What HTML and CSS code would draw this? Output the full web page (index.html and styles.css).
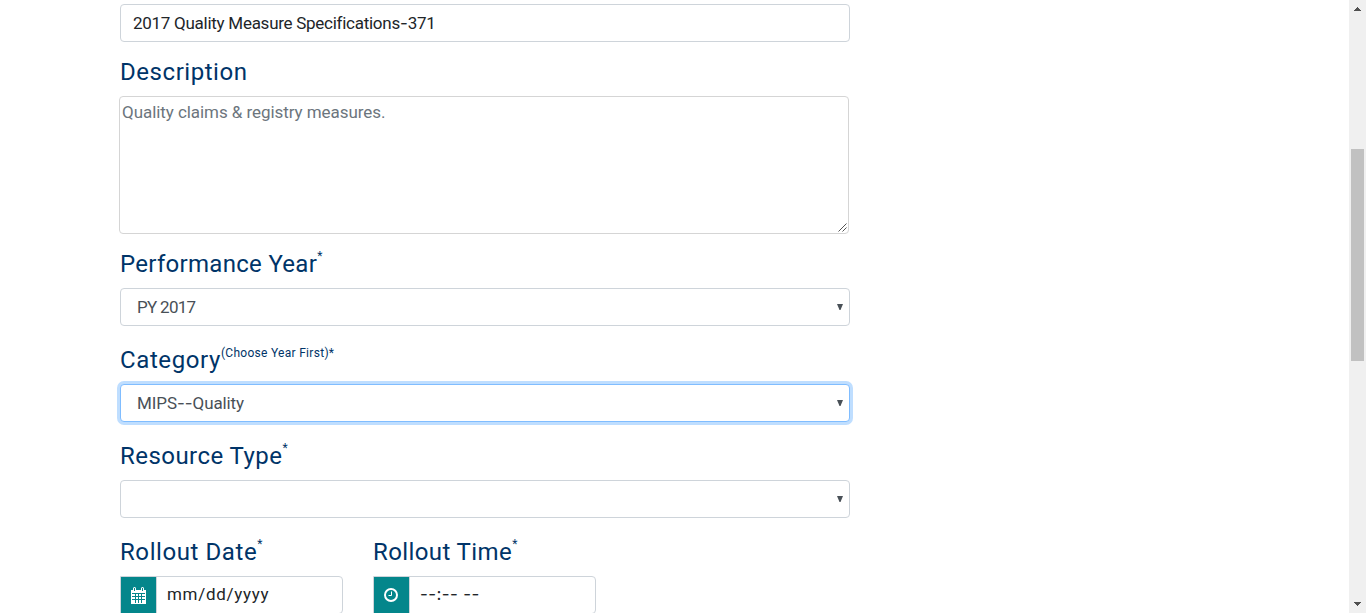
FILE: index.html
```
<!DOCTYPE html>
<html lang="en">
<head>
<meta charset="utf-8">
<title>Resource form</title>
<link rel="stylesheet" href="styles.css">
</head>
<body>
<div class="page">
  <main class="form">
    <div class="control title-control"><span class="t-title">2017 Quality Measure Specifications<span class="dashes">-</span>371</span></div>
    <div class="label"><span class="t-desc">Description</span></div>
    <div class="control textarea"><span class="t-area">Quality claims &amp; registry measures.</span>
      <svg class="grip" width="9" height="9" viewBox="0 0 9 9"><path d="M.5 8.500l8-8M4.500 8.500l4-4" stroke="#555" fill="none"/></svg>
    </div>
    <div class="label"><span class="t-year">Performance Year</span><span class="star">*</span></div>
    <div class="control select"><span class="t-py">PY 2017</span><svg class="arrow" width="6" height="6"><path d="M0 0h6L3.500 6h-1z"/></svg></div>
    <div class="label"><span class="t-cat">Category</span><span class="hint">(Choose Year First)*</span></div>
    <div class="control select focused"><span class="t-mips">MIPS<span class="dashes">--</span>Quality</span><svg class="arrow" width="6" height="6"><path d="M0 0h6L3.500 6h-1z"/></svg></div>
    <div class="label"><span class="t-res">Resource Type</span><span class="star">*</span></div>
    <div class="control select"><svg class="arrow" width="6" height="6"><path d="M0 0h6L3.500 6h-1z"/></svg></div>
    <div class="row">
      <div class="col">
        <div class="label"><span class="t-date">Rollout Date</span><span class="star">*</span></div>
        <div class="control group"><div class="addon"><svg width="16" height="17" viewBox="0 0 16 17"><path fill="#fff" d="M0 3h2V1.500Q2 0 3.500 0T5 1.500V3h5V1.500Q10 0 11.500 0T13 1.500V3h2v14H0z"/><path stroke="#04868b" fill="none" d="M3.500 1v3M11.500 1v3M1 6.500h13M1 9.500h13M1 12.500h13M4.500 6v10M7.500 6v10M10.500 6v10"/></svg></div><span class="value t-mm">mm/dd/yyyy</span></div>
      </div>
      <div class="col">
        <div class="label"><span class="t-time">Rollout Time</span><span class="star">*</span></div>
        <div class="control group"><div class="addon clock"><svg width="14" height="14" viewBox="0 0 14 14"><circle cx="7" cy="7" r="6" fill="none" stroke="#fff" stroke-width="2"/><path d="M7.500 3.500v4h-3" fill="none" stroke="#fff"/></svg></div><span class="value t-hh">--:-- --</span></div>
      </div>
    </div>
  </main>
  <div class="scrollbar">
    <svg width="7" height="4"><path fill="#505050" d="M3 0h1v1h1v1h1v1h1v1H0V3h1V2h1V1h1z"/></svg>
    <div class="track"><div class="thumb"></div></div>
    <svg width="7" height="4"><path fill="#505050" d="M0 0h7v1H6v1H5v1H4v1H3V3H2V2H1V1H0z"/></svg>
  </div>
</div>
</body>
</html>
```
FILE: styles.css
```
* { box-sizing: border-box; }
body { margin: 0; background: #fff; font-family: Roboto, "Liberation Sans", sans-serif; overflow: hidden; }
.page { display: flex; justify-content: space-between; height: 613px; overflow: hidden; }
.form { width: 730px; margin-left: 120px; padding-top: 4px; flex: none; }
.control { display: flex; align-items: center; height: 38px; border: 1px solid #ced4da; border-radius: 4px; background: #fff; font-size: 17px; line-height: 24px; white-space: nowrap; color: #495057; }
.title-control { padding-left: 12px; color: #212529; }
.textarea { position: relative; align-items: flex-start; height: 138px; margin-left: -1px; width: 730px; padding: 3px 2px; border-color: #d5d5d5; color: #6c757d; }
.grip { position: absolute; right: 1px; bottom: 1px; }
.select { justify-content: space-between; margin-bottom: 4px; padding: 0 6px 0 16px; }
.arrow { margin-left: auto; fill: #495057; }
.focused { border-color: #80bdff; box-shadow: 0 0 0 3px #bfdeff; }
.label { display: flex; align-items: flex-start; height: 54px; padding-top: 15px; color: #003468; font-size: 24px; line-height: 30px; white-space: nowrap; }
.star { font-size: 12px; line-height: 12px; margin-top: 1px; }
.hint { font-size: 12px; line-height: 14px; margin-top: 1px; letter-spacing: .29px; }
.t-title { letter-spacing: -.27px; }
.t-desc { letter-spacing: .55px; }
.t-area { letter-spacing: -.06px; }
.t-year { letter-spacing: .3px; }
.t-py { letter-spacing: -.7px; }
.t-cat { letter-spacing: .6px; }
.t-mips { letter-spacing: -.1px; }
.dashes { font-family: Inter, sans-serif; line-height: 1; letter-spacing: 0; }
.t-res { letter-spacing: .45px; }
.t-date { letter-spacing: .58px; }
.t-time { letter-spacing: .4px; }
.t-mm { letter-spacing: .7px; }
.t-hh { font-family: Inter, sans-serif; letter-spacing: .4px; }
.value { padding-bottom: 2px; }
.row { display: flex; gap: 30px; }
.col { width: 223px; }
.group { color: #212529; overflow: hidden; border-radius: 0 4px 4px 0; }
.addon { display: flex; align-items: center; justify-content: center; width: 36px; height: 36px; background: #04868b; border-right: 1px solid #ced4da; margin-right: 10px; }
.clock { padding-right: 2px; }
.scrollbar { display: flex; flex-direction: column; align-items: center; width: 17px; padding: 7px 0; background: #f0f0f0; }
.track { flex: 1; width: 13px; padding-top: 138px; }
.thumb { height: 212px; background: #c1c1c1; }
```
